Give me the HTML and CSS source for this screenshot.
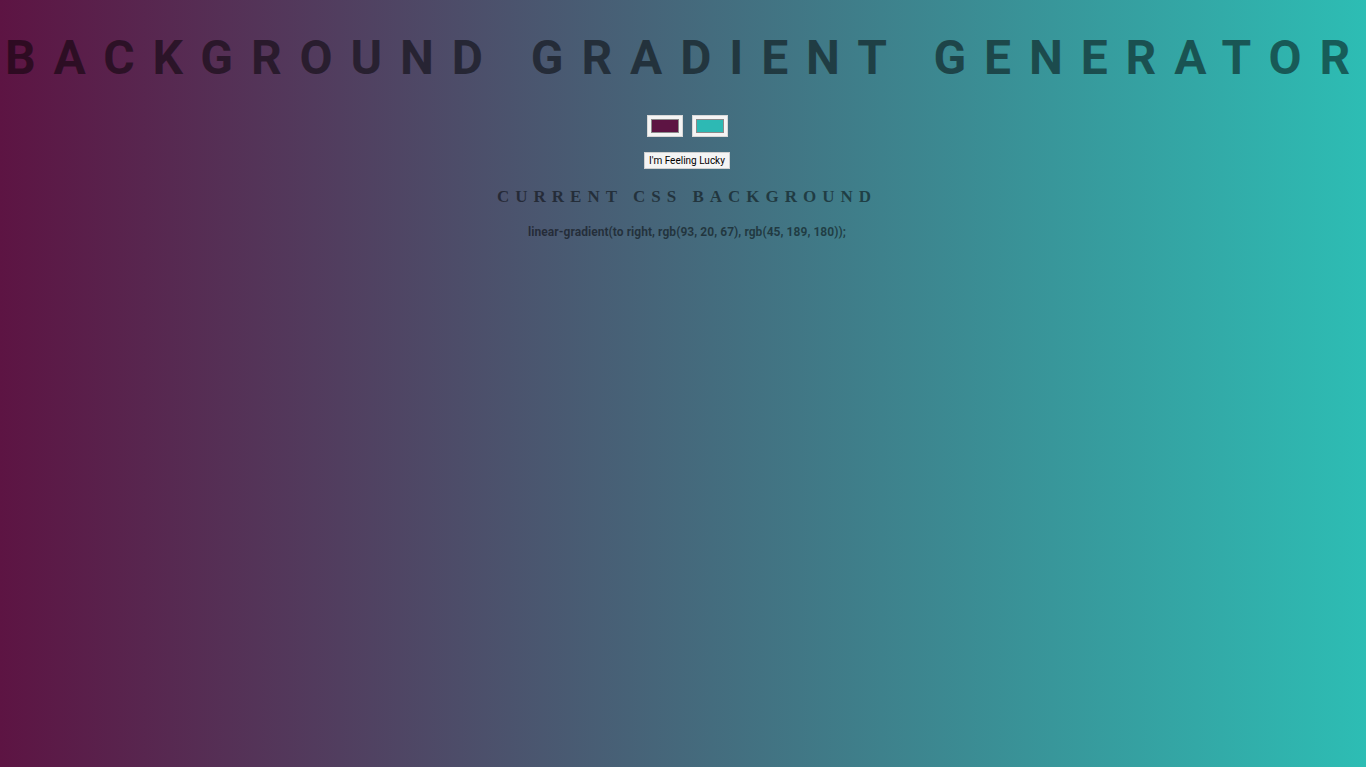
FILE: index.html
```html
<!DOCTYPE html>
<html lang="en">
<head>
<meta charset="utf-8">
<title>Background Generator</title>
<link rel="stylesheet" href="styles.css">
</head>
<body class="page">
  <h1 class="title">Background Gradient Generator</h1>
  <div class="pickers">
    <input class="color" type="color" value="#5d1443">
    <input class="color" type="color" value="#2db9b4">
  </div>
  <div class="actions">
    <button class="lucky" type="button">I'm Feeling Lucky</button>
  </div>
  <h3 class="subtitle">Current CSS Background</h3>
  <p class="code">linear-gradient(to right, rgb(93, 20, 67), rgb(45, 189, 180));</p>
</body>
</html>
```
FILE: styles.css
```css
html {
  height: 100%;
  overflow: hidden;
}
.page {
  margin: 0;
  padding: 0 0 0 8px;
  min-height: 100%;
  box-sizing: border-box;
  background: linear-gradient(to right, rgb(93, 20, 67), rgb(45, 189, 180));
  text-align: center;
  color: rgba(0, 0, 0, 0.5);
  font-family: Roboto, "Liberation Sans", Arial, sans-serif;
}
.title {
  margin: 31px 0 0 -8px;
  padding-left: 5px;
  text-align: left;
  font-size: 48px;
  font-weight: bold;
  text-transform: uppercase;
  letter-spacing: 17.9px;
  line-height: 54px;
  white-space: nowrap;
}
.pickers {
  display: flex;
  justify-content: center;
  gap: 9px;
  margin-top: 30px;
}
.color {
  -webkit-appearance: none;
  appearance: none;
  width: 36px;
  height: 22px;
  padding: 0;
  margin: 0;
  border: 1px solid #d8d8d8;
  background: #f4f4f4;
  box-sizing: border-box;
}
.color::-webkit-color-swatch-wrapper {
  padding: 3px;
}
.color::-webkit-color-swatch {
  border: 1px solid #8a8a8a;
}
.actions {
  display: flex;
  justify-content: center;
  margin-top: 15px;
}
.lucky {
  margin: 0;
  padding: 1px 4px;
  height: 17px;
  font-family: Roboto, "Liberation Sans", Arial, sans-serif;
  font-size: 10px;
  color: #000;
  background: #f4f4f4;
  border: 1px solid #cfcfcf;
  border-radius: 0;
  line-height: 13px;
}
.subtitle {
  margin: 18px 0 0;
  font-family: "Liberation Serif", "Times New Roman", serif;
  font-size: 17px;
  font-weight: bold;
  letter-spacing: 6px;
  text-transform: uppercase;
  line-height: 20px;
}
.code {
  margin: 18px 0 0;
  font-size: 12px;
  font-weight: bold;
  letter-spacing: 0.05px;
  line-height: 14px;
}
```
